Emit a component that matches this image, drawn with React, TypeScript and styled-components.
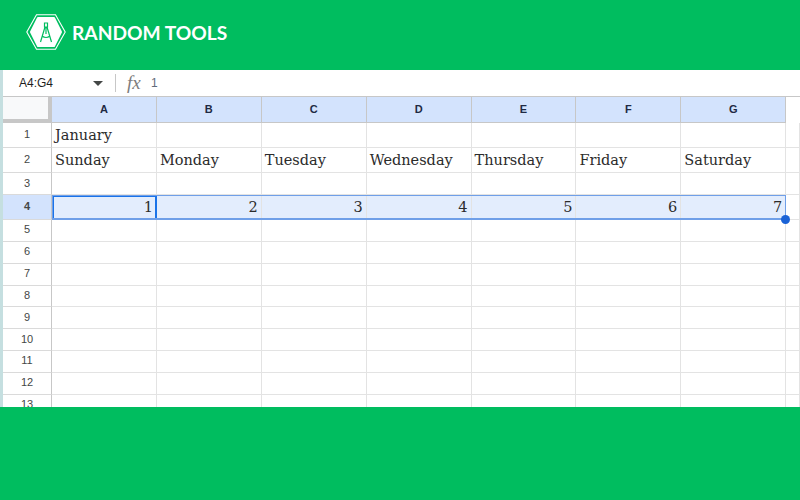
import React from 'react';
import styled, { createGlobalStyle } from 'styled-components';

const Global = createGlobalStyle`
  html, body {
    margin: 0;
    padding: 0;
    background: #00bd5f;
  }
`;

const Page = styled.div`
  width: 800px;
  height: 500px;
  overflow: hidden;
  display: flex;
  flex-direction: column;
  background: #00bd5f;
`;

const Header = styled.header`
  height: 70px;
  display: flex;
  align-items: center;
  gap: 6px;
  padding: 0 0 6px 26px;
  box-sizing: border-box;
`;

const Brand = styled.div`
  font-family: 'Lato', sans-serif;
  font-size: 19.2px;
  font-weight: 700;
  color: #fff;
`;

const Sheet = styled.div`
  height: 337px;
  overflow: hidden;
  background: #fff;
  border-left: 3px solid #c5dfe0;
  box-sizing: border-box;
`;

const FormulaBar = styled.div`
  height: 27px;
  display: flex;
  align-items: center;
  box-sizing: border-box;
  border-bottom: 1px solid #c7c7c7;
  font-family: 'Liberation Sans', Arial, sans-serif;
  font-size: 12px;
  color: #5f6b7a;
`;

const NameBox = styled.div`
  width: 74px;
  margin-left: 16px;
  color: #1f1f1f;
`;

const Caret = styled.i`
  width: 0;
  height: 0;
  border-left: 5px solid transparent;
  border-right: 5px solid transparent;
  border-top: 5px solid #444746;
`;

const Divider = styled.i`
  width: 1px;
  height: 18px;
  margin: 0 11px 0 12px;
  background: #c7c7c7;
`;

const Fx = styled.span`
  width: 24px;
  font-family: 'Liberation Serif', serif;
  font-style: italic;
  font-size: 19px;
  color: #7d7d7d;
`;

const Grid = styled.div`
  display: grid;
  grid-template-columns: 49px repeat(7, 104.9px) 1fr;
  grid-template-rows: 26px 25px 25px 22px 25px repeat(8, 21.85px) 22px;
`;

const Corner = styled.div`
  grid-column: 1;
  grid-row: 1;
  background: #f8f9fa;
  border-right: 4px solid #c7c7c7;
  border-bottom: 4px solid #c7c7c7;
  box-sizing: border-box;
`;

const ColHead = styled.div<{ $col: number }>`
  grid-column: ${(props) => props.$col};
  grid-row: 1;
  display: flex;
  align-items: center;
  justify-content: center;
  padding-bottom: 1px;
  box-sizing: border-box;
  background: #d3e3fd;
  border-right: 1px solid #c7c7c7;
  border-bottom: 1px solid #c7c7c7;
  font-family: 'Liberation Sans', Arial, sans-serif;
  font-size: 11px;
  font-weight: 700;
  color: #1f2a44;
`;

const RowHead = styled.div<{ $row: number; $active?: boolean }>`
  grid-column: 1;
  grid-row: ${(props) => props.$row};
  display: flex;
  align-items: center;
  justify-content: center;
  padding-bottom: 2px;
  box-sizing: border-box;
  background: ${(props) => (props.$active ? '#d3e3fd' : '#fff')};
  border-right: 1px solid #c7c7c7;
  border-bottom: 1px solid #dadada;
  font-family: 'Liberation Sans', Arial, sans-serif;
  font-size: 11px;
  font-weight: ${(props) => (props.$active ? 700 : 400)};
  color: #444746;
`;

const Cell = styled.div<{ $row: number; $col: number; $active?: boolean; $num?: boolean }>`
  grid-column: ${(props) => props.$col};
  grid-row: ${(props) => props.$row};
  display: flex;
  align-items: center;
  justify-content: ${(props) => (props.$num ? 'flex-end' : 'flex-start')};
  padding: 0 3px;
  box-sizing: border-box;
  overflow: hidden;
  white-space: nowrap;
  background: ${(props) => (props.$active ? '#e3edfd' : '#fff')};
  border-right: 1px solid #e3e3e3;
  border-bottom: 1px solid #e3e3e3;
  font-family: 'DejaVu Serif', serif;
  font-size: 14.5px;
  color: #2b2b2b;
`;

const Range = styled.div`
  grid-column: 2 / span 7;
  grid-row: 5;
  position: relative;
  border: 1px solid #6f9fe8;
  border-bottom-width: 2px;
  pointer-events: none;
`;

const ActiveCell = styled.div`
  grid-column: 2;
  grid-row: 5;
  border: 2px solid #1a73e8;
  pointer-events: none;
`;

const Handle = styled.i`
  position: absolute;
  right: -5px;
  bottom: -6px;
  width: 9px;
  height: 9px;
  border-radius: 50%;
  background: #1a62d6;
`;

const Logo = () => (
  <svg width="40" height="36" viewBox="0 0 40 36" fill="none">
    <path d="M10.5 .8 H29.5 L39.2 18 L29.5 35.2 H10.5 L.8 18 Z" stroke="#fff" strokeWidth="1.1" />
    <path d="M12 4 H28 L35 18 L28 32 H12 L5 18 Z" fill="#fff" stroke="#fff" strokeWidth="2" strokeLinejoin="round" />
    <path
      d="M18.5 9 H21.5 V13 H18.5 Z M19 13 L14.5 28 M21 13 L25.5 28 M16 22 Q20 25 24 22 M20 13 V20"
      stroke="#00bd5f"
      strokeWidth="1.2"
    />
  </svg>
);

const columns = ['A', 'B', 'C', 'D', 'E', 'F', 'G'];
const days = ['Sunday', 'Monday', 'Tuesday', 'Wednesday', 'Thursday', 'Friday', 'Saturday'];
const rows = [1, 2, 3, 4, 5, 6, 7, 8, 9, 10, 11, 12, 13];

const cellText = (row: number, col: number) => {
  if (row === 1 && col === 0) return 'January';
  if (row === 2) return days[col] ?? '';
  if (row === 4) return col < 7 ? String(col + 1) : '';
  return '';
};

export default function App() {
  return (
    <Page>
      <Global />
      <Header>
        <Logo />
        <Brand>RANDOM TOOLS</Brand>
      </Header>
      <Sheet>
        <FormulaBar>
          <NameBox>A4:G4</NameBox>
          <Caret />
          <Divider />
          <Fx>fx</Fx>
          <span>1</span>
        </FormulaBar>
        <Grid>
          <Corner />
          {columns.map((c, i) => (
            <ColHead key={c} $col={i + 2}>
              {c}
            </ColHead>
          ))}
          {rows.map((r) => (
            <React.Fragment key={r}>
              <RowHead $row={r + 1} $active={r === 4}>
                {r}
              </RowHead>
              {[0, 1, 2, 3, 4, 5, 6, 7].map((c) => (
                <Cell key={c} $row={r + 1} $col={c + 2} $active={r === 4 && c < 7} $num={r === 4}>
                  {cellText(r, c)}
                </Cell>
              ))}
            </React.Fragment>
          ))}
          <Range>
            <Handle />
          </Range>
          <ActiveCell />
        </Grid>
      </Sheet>
    </Page>
  );
}
